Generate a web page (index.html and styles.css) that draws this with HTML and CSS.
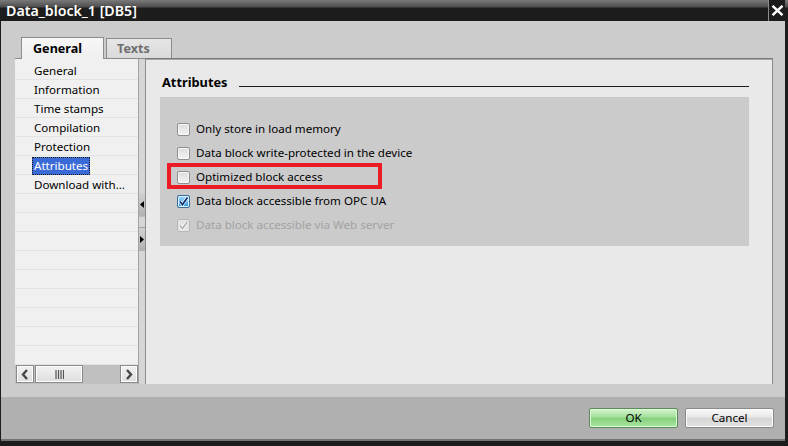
FILE: index.html
```html
<!DOCTYPE html>
<html lang="en">
<head>
<meta charset="utf-8">
<title>Data_block_1 [DB5]</title>
<link rel="stylesheet" href="styles.css">
</head>
<body>
<div class="window">
  <div class="titlebar">
    <span class="title">Data_block_1 [DB5]</span>
    <div class="close">
      <svg width="13" height="11" viewBox="0 0 13 11"><path d="M1.5 0.8 L11.5 10.2 M11.5 0.8 L1.5 10.2" stroke="#fff" stroke-width="2.4" fill="none"/></svg>
    </div>
  </div>
  <div class="frame">
    <div class="upper">
      <div class="tabs">
        <div class="tab active">General</div>
        <div class="tab">Texts</div>
      </div>
      <div class="content">
        <div class="nav">
          <ul class="navlist">
            <li><span>General</span></li>
            <li><span>Information</span></li>
            <li><span>Time stamps</span></li>
            <li><span>Compilation</span></li>
            <li><span>Protection</span></li>
            <li class="selected"><span>Attributes</span></li>
            <li><span>Download with...</span></li>
          </ul>
          <div class="hscroll">
            <div class="sbtn">
              <svg width="8" height="11" viewBox="0 0 8 11"><path d="M6 1 L2 5.5 L6 10" stroke="#474747" stroke-width="2.4" fill="none"/></svg>
            </div>
            <div class="thumb">
              <svg width="9" height="9" viewBox="0 0 9 9"><path d="M1 0V9M3.5 0V9M6 0V9M8.5 0V9" stroke="#555" stroke-width="1.2"/></svg>
            </div>
            <div class="track"></div>
            <div class="sbtn">
              <svg width="8" height="11" viewBox="0 0 8 11"><path d="M2 1 L6 5.5 L2 10" stroke="#474747" stroke-width="2.4" fill="none"/></svg>
            </div>
          </div>
        </div>
        <div class="splitter">
          <div class="seg">
            <svg width="4" height="7" viewBox="0 0 4 7"><path d="M4 0 L0 3.5 L4 7Z" fill="#000"/></svg>
          </div>
          <div class="segspace"></div>
          <div class="seg">
            <svg width="4" height="7" viewBox="0 0 4 7"><path d="M0 0 L4 3.5 L0 7Z" fill="#000"/></svg>
          </div>
        </div>
        <div class="panel">
          <div class="heading">
            <span class="heading-text">Attributes</span>
            <span class="heading-line"></span>
          </div>
          <div class="attrbox">
            <div class="row">
              <span class="cb"></span><span class="label">Only store in load memory</span>
            </div>
            <div class="row">
              <span class="cb"></span><span class="label">Data block write-protected in the device</span>
            </div>
            <div class="row">
              <span class="cb"></span><span class="label">Optimized block access</span>
            </div>
            <div class="row">
              <span class="cb checked">
                <svg width="13" height="13" viewBox="0 0 13 13"><path d="M3 6.5 L5.5 9.5 L10.5 2.5" stroke="#fff" stroke-width="3.2" fill="none"/><path d="M3 6.5 L5.5 9.5 L10.5 2.5" stroke="#0d2f6e" stroke-width="1.8" fill="none"/></svg>
              </span><span class="label">Data block accessible from OPC UA</span>
            </div>
            <div class="row disabled">
              <span class="cb dis">
                <svg width="13" height="13" viewBox="0 0 13 13"><path d="M3 6.5 L5.5 9.5 L10.5 2.5" stroke="#fff" stroke-width="3.2" fill="none"/><path d="M3 6.5 L5.5 9.5 L10.5 2.5" stroke="#b4b4b4" stroke-width="1.8" fill="none"/></svg>
              </span><span class="label">Data block accessible via Web server</span>
            </div>
            <div class="highlight"></div>
          </div>
        </div>
      </div>
    </div>
    <div class="footer">
      <button class="btn ok">OK</button>
      <button class="btn">Cancel</button>
    </div>
  </div>
</div>
</body>
</html>
```
FILE: styles.css
```css
* { box-sizing: border-box; }
html, body { margin: 0; padding: 0; }
body {
  background: #1c1c1c;
  font-family: "Noto Sans", "Liberation Sans", Arial, sans-serif;
  font-size: 11.6px;
  color: #000;
}
.window {
  width: 788px;
  height: 446px;
  background: #1c1c1c;
  overflow: hidden;
}
.titlebar {
  height: 21px;
  display: flex;
  align-items: stretch;
  background: linear-gradient(#7a7a7a 0, #4c4c4c 7px, #1d1d1d 8px, #1c1c1c 100%);
}
.title {
  flex: 1;
  color: #fff;
  font-weight: 600;
  font-size: 14.2px;
  padding-left: 6px;
  line-height: 21px;
}
.close {
  width: 17px;
  margin-right: 3px;
  border-left: 1px solid #8a8a8a;
  background: #1c1c1c;
  display: flex;
  align-items: center;
  justify-content: center;
}
.frame {
  margin-left: 1px;
  width: 784px;
  border-bottom: 2px solid #747474;
}
.upper {
  height: 376px;
  background: #cccccc;
  padding: 16px 12px 13px 14px;
  display: flex;
  flex-direction: column;
}
.tabs {
  display: flex;
  align-items: flex-end;
  gap: 2px;
  padding-left: 6px;
  height: 21px;
}
.tab {
  width: 66px;
  height: 20px;
  border: 1px solid #8c8c8c;
  border-bottom: none;
  background: linear-gradient(#e6e6e6, #dadada);
  color: #6e6e6e;
  font-weight: bold;
  font-size: 12.6px;
  padding-left: 10px;
  line-height: 19px;
}
.tab.active {
  width: 83px;
  height: 22px;
  margin-bottom: -1px;
  padding-left: 11px;
  background: linear-gradient(#f7f7f7, #efefef);
  color: #000;
  line-height: 21px;
  position: relative;
  z-index: 1;
}
.content {
  flex: 1;
  display: flex;
  border-top: 1px solid #8a8a8a;
}
.nav {
  width: 123px;
  display: flex;
  flex-direction: column;
  background: #f0f0f0;
}
.navlist {
  list-style: none;
  margin: 0;
  padding: 2px 0 0 0;
  flex: 1;
  background-color: #f0f0f0;
  background-image: repeating-linear-gradient(#f0f0f0 0, #f0f0f0 18px, #e3e3e3 18px, #e3e3e3 19px);
  background-position: 0 2px;
}
.navlist li {
  height: 19px;
  padding-left: 17px;
  display: flex;
  align-items: center;
}
.navlist li span {
  padding: 0 2px;
  line-height: 18px;
  height: 18px;
}
.navlist li.selected span {
  background: #3a6ad6;
  color: #fff;
  outline: 1px dotted #1a1a1a;
  outline-offset: -1px;
}
.hscroll {
  height: 19px;
  background: #c0c0c0;
  display: flex;
  padding: 0 0 1px 1px;
  gap: 1px;
}
.sbtn, .thumb {
  border: 1px solid #8a8a8a;
  box-shadow: inset 0 0 0 1px #fdfdfd;
  background: linear-gradient(#f2f2f2, #dedede);
  display: flex;
  align-items: center;
  justify-content: center;
}
.sbtn { width: 18px; }
.thumb { width: 48px; }
.track { flex: 1; }
.splitter {
  width: 8px;
  border-left: 1px solid #a2a2a2;
  border-right: 1px solid #8c8c8c;
  background: #d6d6d6;
  display: flex;
  flex-direction: column;
  padding-top: 134px;
}
.seg {
  height: 23px;
  background: linear-gradient(#d2d2d2, #b0b0b0);
  display: flex;
  align-items: center;
  padding-left: 1px;
}
.segspace {
  height: 12px;
  border-top: 1px solid #bcbcbc;
  border-bottom: 1px solid #a0a0a0;
}
.panel {
  flex: 1;
  background: #e9e9e9;
  border-top: 1px solid #7a7a7a;
  box-shadow: inset 0 1px 0 #a6a6a6;
  margin-top: -1px;
  border-right: 1px solid #8a8a8a;
  padding: 15px 23px 0 14px;
}
.heading {
  display: flex;
  height: 16px;
  margin-bottom: 7px;
}
.heading-text {
  font-weight: bold;
  font-size: 12.8px;
  line-height: 16px;
  padding-left: 2px;
  margin-right: 11px;
}
.heading-line {
  flex: 1;
  align-self: flex-end;
  height: 1px;
  margin-bottom: 3px;
  background: #1a1a1a;
}
.attrbox {
  position: relative;
  background: #cbcbcb;
  padding: 20px 0 9px 17px;
}
.row {
  height: 24px;
  display: flex;
  align-items: center;
  gap: 6px;
}
.cb {
  width: 13px;
  height: 13px;
  border: 1px solid #8e8f8f;
  border-radius: 2px;
  background: linear-gradient(#dcdcdc, #f4f4f4);
  box-shadow: inset 0 0 0 1px #f6f6f6;
  position: relative;
}
.cb svg { position: absolute; left: -1px; top: -1px; }
.cb.checked {
  border-color: #3a6c9c;
  background: linear-gradient(#9fdcff, #2a93e0);
  box-shadow: inset 0 0 0 1px #d8f0ff;
}
.cb.dis {
  border-color: #b8b8b8;
  background: #e4e4e4;
  box-shadow: none;
}
.label { line-height: 16px; }
.row.disabled .label { color: #a2a2a2; }
.highlight {
  position: absolute;
  left: 7px;
  top: 66px;
  width: 215px;
  height: 26px;
  border: 4px solid #ec1c24;
}
.footer {
  height: 42px;
  background: #b0b0b0;
  display: flex;
  justify-content: flex-end;
  align-items: flex-start;
  gap: 7px;
  padding: 11px 11px 0 0;
}
.btn {
  width: 89px;
  height: 20px;
  border: 1px solid #8a8a8a;
  border-radius: 2px;
  background: linear-gradient(#fafafa 0, #e8e8e8 45%, #d6d6d6 50%, #e2e2e2 100%);
  box-shadow: inset 0 0 0 1px #fbfbfb;
  font-family: "Noto Sans", "Liberation Sans", Arial, sans-serif;
  font-size: 11.6px;
  color: #000;
  padding: 0;
  line-height: 18px;
}
.btn.ok {
  border-color: #5a8c5a;
  background: linear-gradient(#d4f4cc 0, #a4e09c 45%, #84d07c 50%, #a8e6a0 100%);
  box-shadow: inset 0 0 0 1px #e0f8d8;
}
```
